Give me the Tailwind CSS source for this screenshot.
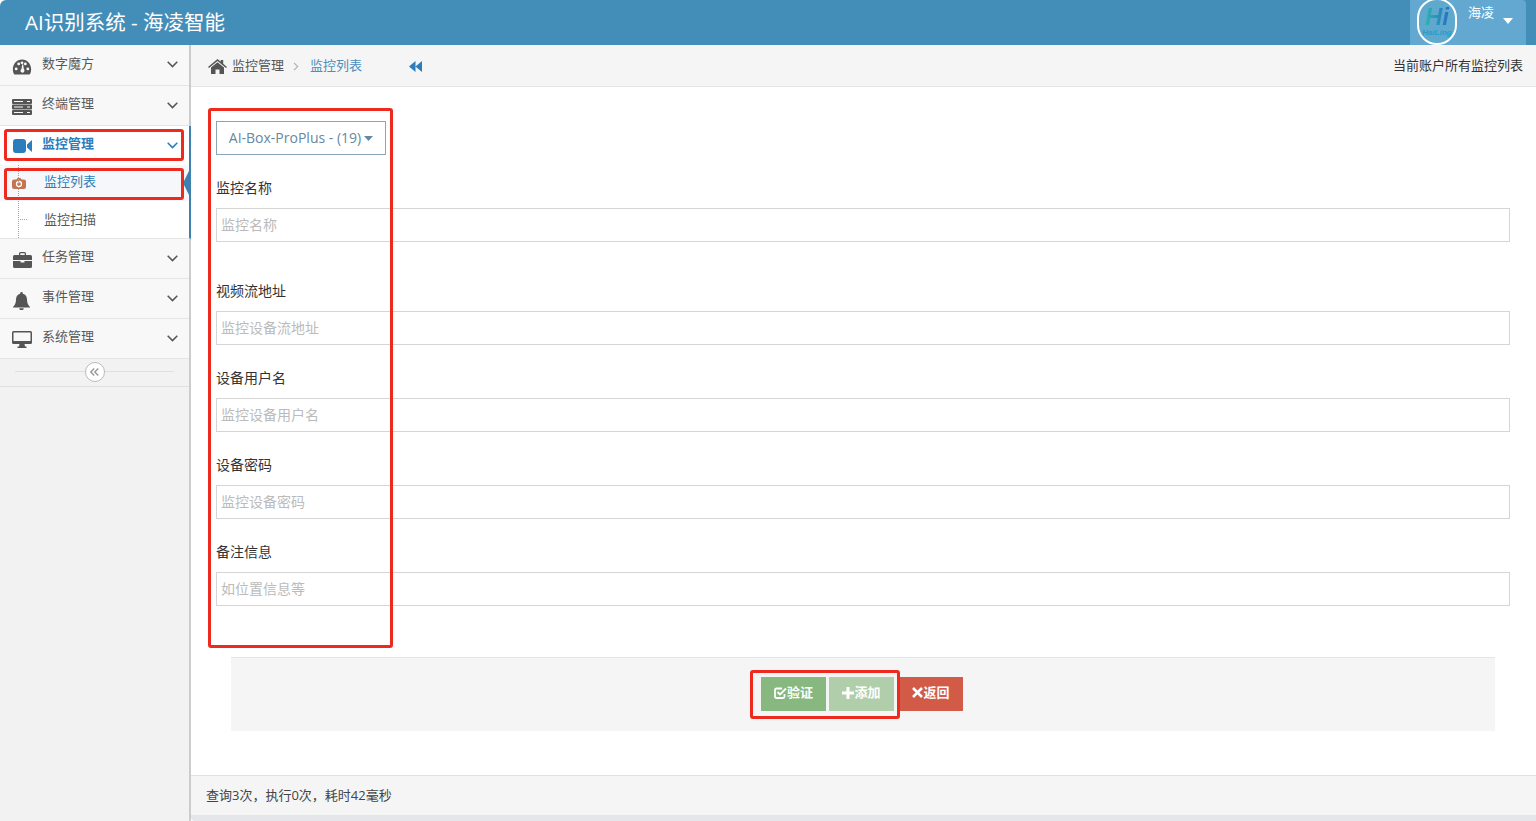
<!DOCTYPE html>
<html lang="zh-CN">
<head>
    <meta charset="UTF-8">
    <title>AI识别系统</title>
    <script src="https://cdn.jsdelivr.net/npm/@tailwindcss/browser@4"></script>
</head>
<body class="h-[821px] w-[1536px] overflow-hidden relative bg-white text-[13px] text-[#393939] font-['Open_Sans','Noto_Sans_CJK_SC',sans-serif]">
    <!-- Navbar -->
    <header class="h-[45px] bg-[#438eb9] flex justify-between rounded-tl-md">
        <div class="pl-[25px] text-[20.500px] leading-[45px] text-white">AI识别系统 - 海凌智能</div>
        <div class="w-[116px] mr-[10px] bg-[#62a8d1] flex pl-[7px] relative rounded-tr-sm">
            <div class="w-[40px] h-[47px] rounded-full border-2 border-white bg-[#5fa9cf] -mt-[2px] flex flex-col items-center justify-center overflow-hidden">
                <span class="text-[24px] leading-[22px] font-bold italic text-transparent bg-clip-text bg-linear-to-r from-[#2fb5b0] to-[#2a6fc0] font-['Liberation_Sans']">Hi</span>
                <span class="text-[8px] leading-[9px] font-bold italic text-[#2a9cc8] font-['Liberation_Sans']">HaiLing</span>
            </div>
            <span class="ml-[11px] mt-[4px] text-[13px] leading-[17px] text-white">海凌</span>
            <svg class="absolute left-[93px] top-[18px] w-[10px] h-[6px]" viewBox="0 0 10 6"><path d="M0 0h10L5 6z" fill="#fff"/></svg>
        </div>
    </header>

    <div class="flex h-[776px]">
        <!-- Sidebar -->
        <aside class="w-[191px] shrink-0 bg-[#f2f2f2] border-r-2 border-[#cccccc]">
            <ul>
                <li class="h-[41px] bg-[#f8f8f8] border-b border-[#e5e5e5] flex items-center text-[#585858]">
                    <svg class="w-[20px] h-[20px] ml-[12px] mt-[3px]" viewBox="0 0 24 24" fill="#555"><path d="M12 3C5.400 3 1 8.500 1 15c0 2 .5 3.800 1.300 5.500.2.300.5.500.9.500h17.600c.4 0 .7-.2.900-.5.800-1.700 1.300-3.500 1.300-5.500 0-6.500-4.400-12-11-12zM5 16a1.700 1.700 0 110-3.400A1.700 1.700 0 015 16zm3-6a1.700 1.700 0 110-3.400A1.700 1.700 0 018 10zm5.600 8.600a2.400 2.400 0 01-3.400-2.200c0-.8.500-1.500 1.200-1.900l.8-5.500h1.200l.8 5.500c1.100.8 1.100 3.100-.6 4.100zM12 8.700a1.700 1.700 0 110-3.400 1.700 1.700 0 010 3.400zM16 10a1.700 1.700 0 110-3.400 1.700 1.700 0 010 3.400zm3 6a1.700 1.700 0 110-3.400 1.700 1.700 0 010 3.400z"/></svg>
                    <span class="ml-[10px] -mt-[2px]">数字魔方</span>
                    <svg class="w-[11px] h-[7px] ml-auto mr-[11px] -mt-[1px]" viewBox="0 0 11 7" fill="none" stroke="#555" stroke-width="1.500"><path d="M.7.8l4.800 4.800L10.300.8"/></svg>
                </li>
                <li class="h-[40px] bg-[#f8f8f8] border-b border-[#e5e5e5] flex items-center text-[#585858]">
                    <svg class="w-[20px] h-[16px] ml-[12px] mt-[2px]" viewBox="0 0 20 16" fill="#555"><path d="M1 0h18a1 1 0 011 1v3a1 1 0 01-1 1H1a1 1 0 01-1-1V1a1 1 0 011-1zm0 5.500h18a1 1 0 011 1v3a1 1 0 01-1 1H1a1 1 0 01-1-1v-3a1 1 0 011-1zM1 11h18a1 1 0 011 1v3a1 1 0 01-1 1H1a1 1 0 01-1-1v-3a1 1 0 011-1z"/><path d="M2 2h9v1H2zM2 7.500h9v1H2zM2 13h9v1H2zM15 2h3v1h-3zM15 7.500h3v1h-3zM15 13h3v1h-3z" fill="#f8f8f8"/></svg>
                    <span class="ml-[10px] -mt-[4px]">终端管理</span>
                    <svg class="w-[11px] h-[7px] ml-auto mr-[11px] -mt-[1px]" viewBox="0 0 11 7" fill="none" stroke="#555" stroke-width="1.500"><path d="M.7.8l4.800 4.800L10.300.8"/></svg>
                </li>
                <li class="h-[113px] -mr-[2px] bg-white border-b border-[#e5e5e5] border-r-2 border-r-[#3f81ae] relative">
                    <div class="h-[39px] flex items-center text-[#2b7dbc] font-semibold">
                        <svg class="w-[19px] h-[14px] ml-[13px] mt-[1px]" viewBox="0 0 19 14" fill="#2b7dbc"><rect width="13" height="14" rx="3"/><path d="M14 5.500L19 1v12l-5-4.500z"/></svg>
                        <span class="ml-[10px] -mt-[3px]">监控管理</span>
                        <svg class="w-[11px] h-[7px] ml-auto mr-[11px]" viewBox="0 0 11 7" fill="none" stroke="#2b7dbc" stroke-width="1.500"><path d="M.7.8l4.800 4.800L10.300.8"/></svg>
                    </div>
                    <div class="h-[36px] bg-[#f5f7fa] flex items-center text-[#2b7dbc]">
                        <svg class="w-[14px] h-[11px] ml-[12px] mt-[1px]" viewBox="0 0 14 11"><path d="M2 1.500h2.500L5.500 0h3l1 1.500H12a2 2 0 012 2V9a2 2 0 01-2 2H2a2 2 0 01-2-2V3.500a2 2 0 012-2z" fill="#c4744f"/><circle cx="7" cy="6" r="2.500" fill="none" stroke="#fff" stroke-width="1.300"/></svg>
                        <span class="ml-[18px] -mt-[3px]">监控列表</span>
                    </div>
                    <div class="h-[37px] flex items-center pl-[44px] text-[#585858]">监控扫描</div>
                    <div class="absolute left-[18px] top-[39px] h-[73px] border-l border-dotted border-[#9aa7b4]"></div>
                    <div class="absolute left-[18px] top-[93px] w-[9px] border-t border-dotted border-[#9aa7b4]"></div>
                    <div class="absolute -right-[1px] top-[43px] w-0 h-0 border-y-[14px] border-y-transparent border-r-[7px] border-r-[#3f81ae]"></div>
                </li>
                <li class="h-[40px] bg-[#f8f8f8] border-b border-[#e5e5e5] flex items-center text-[#585858]">
                    <svg class="w-[19px] h-[16px] ml-[13px] mt-[2px]" viewBox="0 0 19 16" fill="#555"><path d="M6 3V1.500A1.500 1.500 0 017.500 0h4A1.500 1.500 0 0113 1.500V3h4.500A1.500 1.500 0 0119 4.500V8H0V4.500A1.500 1.500 0 011.500 3zm1.300 0h4.400V1.300H7.300zM0 9h7.500v1.500h4V9H19v5.500a1.500 1.500 0 01-1.500 1.500h-16A1.500 1.500 0 010 14.500z"/></svg>
                    <span class="ml-[10px] -mt-[4px]">任务管理</span>
                    <svg class="w-[11px] h-[7px] ml-auto mr-[11px] -mt-[1px]" viewBox="0 0 11 7" fill="none" stroke="#555" stroke-width="1.500"><path d="M.7.8l4.800 4.800L10.300.8"/></svg>
                </li>
                <li class="h-[40px] bg-[#f8f8f8] border-b border-[#e5e5e5] flex items-center text-[#585858]">
                    <svg class="w-[17px] h-[18px] ml-[13px] mt-[4px]" viewBox="0 0 17 18" fill="#555"><path d="M8.500 0a1.300 1.300 0 011.300 1.300v.4C12.600 2.300 14 4.500 14 7.500c0 3.500 1 5.500 3 7.500v.5H0V15c2-2 3-4 3-7.500 0-3 1.400-5.200 4.200-5.800v-.4A1.300 1.300 0 018.500 0zM6.300 16.200h4.400a2.200 2.200 0 01-4.400 0z"/></svg>
                    <span class="ml-[12px] -mt-[4px]">事件管理</span>
                    <svg class="w-[11px] h-[7px] ml-auto mr-[11px] -mt-[1px]" viewBox="0 0 11 7" fill="none" stroke="#555" stroke-width="1.500"><path d="M.7.8l4.800 4.800L10.300.8"/></svg>
                </li>
                <li class="h-[40px] bg-[#f8f8f8] border-b border-[#e5e5e5] flex items-center text-[#585858]">
                    <svg class="w-[20px] h-[17px] ml-[12px] mt-[2px]" viewBox="0 0 20 17" fill="#555"><path d="M1.500 0h17A1.500 1.500 0 0120 1.500v10a1.500 1.500 0 01-1.500 1.500H12.500l.5 2.500h1.500V17h-9v-1.500H7L7.500 13h-6A1.500 1.500 0 010 11.500v-10A1.500 1.500 0 011.500 0zm0 1.500v8.500h17V1.500z"/></svg>
                    <span class="ml-[10px] -mt-[4px]">系统管理</span>
                    <svg class="w-[11px] h-[7px] ml-auto mr-[11px] -mt-[1px]" viewBox="0 0 11 7" fill="none" stroke="#555" stroke-width="1.500"><path d="M.7.8l4.800 4.800L10.300.8"/></svg>
                </li>
            </ul>
            <div class="h-[28px] border-b border-[#e0e0e0] flex items-center justify-center relative pb-[2px]">
                <div class="absolute left-[15px] w-[159px] border-t border-[#e0e0e0]"></div>
                <div class="relative w-[20px] h-[20px] rounded-full border border-[#bbbbbb] bg-white flex items-center justify-center">
                    <svg class="w-[9px] h-[8px]" viewBox="0 0 9 8" fill="none" stroke="#999" stroke-width="1.400"><path d="M4.200.5L.8 4l3.400 3.500M8.200.5L4.800 4l3.400 3.500"/></svg>
                </div>
            </div>
        </aside>

        <!-- Main -->
        <main class="flex-1 flex flex-col">
            <div class="h-[42px] shrink-0 bg-[#f5f5f5] border-b border-[#e5e5e5] flex items-center pl-[17px] pr-[13px] pt-[1px]">
                <svg class="w-[19px] h-[15px]" viewBox="0 0 19 15" fill="#555"><path d="M9.500 0l3.200 2.700V1h2.500v3.800L19 8l-1 1-8.500-7L1 9 0 8zM9.500 3.200L16 8.600V15h-4.500v-4.500h-4V15H3V8.600z"/></svg>
                <span class="ml-[5px] text-[#555]">监控管理</span>
                <svg class="w-[6px] h-[9px] ml-[9px]" viewBox="0 0 6 9" fill="none" stroke="#b3b3b3" stroke-width="1.200"><path d="M1 .8l3.700 3.700L1 8.200"/></svg>
                <span class="ml-[11px] text-[#4c8fbd]">监控列表</span>
                <svg class="w-[13px] h-[11px] ml-[47px]" viewBox="0 0 13 11" fill="#2b7dbc"><path d="M6.500 0v11L0 5.500zM13 0v11L6.500 5.500z"/></svg>
                <span class="ml-auto text-[#333]">当前账户所有监控列表</span>
            </div>

            <div class="flex-1 bg-white pl-[25px] pr-[26px] pt-[34px]">
                <button class="w-[170px] h-[34px] pb-[2px] border border-[#8aa4b8] flex items-center justify-center text-[14px] text-[#6688a0]">
                    AI-Box-ProPlus - (19)
                    <svg class="w-[9px] h-[5px] ml-[3px] mt-[2px]" viewBox="0 0 9 5"><path d="M0 0h9L4.500 5z" fill="#6688a0"/></svg>
                </button>
                <div class="mt-[23px] text-[14px] leading-[20px] text-[#333]">监控名称</div>
                <input class="mt-[10px] block w-full h-[34px] border border-[#d5d5d5] px-[4px] pb-[2px] text-[14px] placeholder:text-[#bbbbbb]" placeholder="监控名称">
                <div class="mt-[39px] text-[14px] leading-[20px] text-[#333]">视频流地址</div>
                <input class="mt-[10px] block w-full h-[34px] border border-[#d5d5d5] px-[4px] pb-[2px] text-[14px] placeholder:text-[#bbbbbb]" placeholder="监控设备流地址">
                <div class="mt-[23px] text-[14px] leading-[20px] text-[#333]">设备用户名</div>
                <input class="mt-[10px] block w-full h-[34px] border border-[#d5d5d5] px-[4px] pb-[2px] text-[14px] placeholder:text-[#bbbbbb]" placeholder="监控设备用户名">
                <div class="mt-[23px] text-[14px] leading-[20px] text-[#333]">设备密码</div>
                <input class="mt-[10px] block w-full h-[34px] border border-[#d5d5d5] px-[4px] pb-[2px] text-[14px] placeholder:text-[#bbbbbb]" placeholder="监控设备密码">
                <div class="mt-[23px] text-[14px] leading-[20px] text-[#333]">备注信息</div>
                <input class="mt-[10px] block w-full h-[34px] border border-[#d5d5d5] px-[4px] pb-[2px] text-[14px] placeholder:text-[#bbbbbb]" placeholder="如位置信息等">

                <div class="mt-[51px] mx-[15px] h-[74px] pb-[2px] pr-[2px] bg-[#f5f5f5] border-t border-[#e5e5e5] flex items-center justify-center gap-[3px]">
                    <button class="w-[65px] h-[34px] pb-[2px] bg-[#87b87f] text-white font-semibold flex items-center justify-center">
                        <svg class="w-[13px] h-[12px]" viewBox="0 0 13 12" fill="none" stroke="#fff" stroke-width="1.800"><path d="M10.500 7v2.500a1.500 1.500 0 01-1.500 1.500H2.500A1.500 1.500 0 011 9.500V3a1.500 1.500 0 011.500-1.500H8"/><path d="M3.500 5l2.500 2.500L12 1.500"/></svg>
                        验证
                    </button>
                    <button class="w-[65px] h-[34px] pb-[2px] bg-[#b0ceaa] text-white font-semibold flex items-center justify-center">
                        <svg class="w-[12px] h-[12px]" viewBox="0 0 12 12" fill="#fff"><path d="M4.500 0h3v4.500H12v3H7.500V12h-3V7.500H0v-3h4.500z"/></svg>
                        添加
                    </button>
                    <button class="ml-[2px] w-[64px] h-[34px] pb-[2px] bg-[#d15b47] text-white font-semibold flex items-center justify-center">
                        <svg class="w-[11px] h-[11px]" viewBox="0 0 11 11" fill="none" stroke="#fff" stroke-width="2.600"><path d="M1 1l9 9M10 1l-9 9"/></svg>
                        返回
                    </button>
                </div>
            </div>

            <footer class="h-[46px] shrink-0 bg-[#f5f5f5] border-t border-[#e0e0e0] border-b-[6px] border-b-[#e4e6e9] pl-[15px] flex items-center text-[#444] rounded-bl-sm">查询3次，执行0次，耗时42毫秒</footer>
        </main>
    </div>

    <!-- red annotation boxes over the screenshot -->
    <div class="absolute left-[4px] top-[129px] w-[180px] h-[32px] border-[3px] border-[#ee2a1e] rounded-[3px]"></div>
    <div class="absolute left-[4px] top-[168px] w-[180px] h-[32px] border-[3px] border-[#ee2a1e] rounded-[3px]"></div>
    <div class="absolute left-[208px] top-[108px] w-[185px] h-[540px] border-[3px] border-[#ee2a1e] rounded-[3px]"></div>
    <div class="absolute left-[750px] top-[670px] w-[150px] h-[49px] border-[3px] border-[#ee2a1e] rounded-[3px]"></div>
</body>
</html>
